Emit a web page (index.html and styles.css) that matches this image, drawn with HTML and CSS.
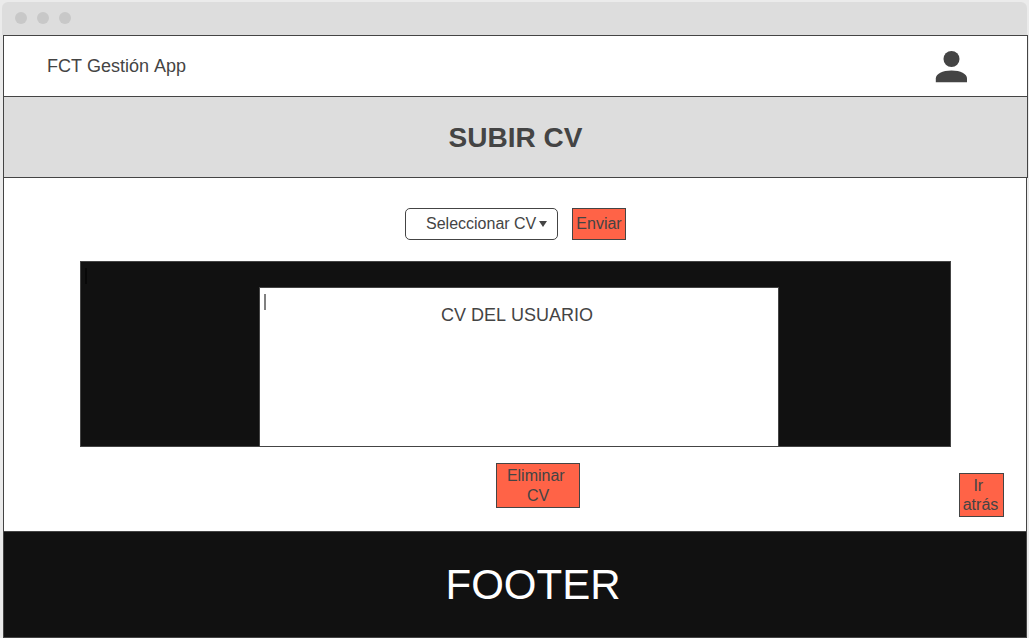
FILE: index.html
```html
<!DOCTYPE html>
<html lang="es">
<head>
<meta charset="utf-8">
<meta name="viewport" content="width=device-width, initial-scale=1">
<title>FCT Gestión App</title>
<link rel="stylesheet" href="styles.css">
</head>
<body>
<div class="window">
  <div class="window-bar">
    <span class="dot"></span><span class="dot"></span><span class="dot"></span>
  </div>
  <div class="app">
    <header class="header">
      <span class="brand">FCT Gestión App</span>
      <svg class="user" viewBox="0 0 32 32" aria-hidden="true">
        <circle cx="16.500" cy="8" r="8"/>
        <path d="M0.800 31.200V27.500C0.800 23 7.500 19.500 16.500 19.500S32 23 32 27.500V31.200Z"/>
      </svg>
    </header>
    <div class="title-band"><h1 class="title">SUBIR CV</h1></div>
    <main class="main">
      <form class="upload">
        <div class="picker">
          <select class="select" aria-label="Seleccionar CV"><option>Seleccionar CV</option></select>
          <svg class="arrow" viewBox="0 0 8 6" aria-hidden="true"><path d="M0 0H8L4 6Z"/></svg>
        </div>
        <button class="button send" type="button">Enviar</button>
      </form>
      <section class="viewer">
        <span class="caret caret-dark"></span>
        <div class="document">
          <span class="caret"></span>
          <p class="document-title">CV DEL USUARIO</p>
        </div>
      </section>
      <div class="actions">
        <button class="button remove" type="button">Eliminar&nbsp;<br>CV</button>
        <button class="button back" type="button">Ir&nbsp;<br>atrás</button>
      </div>
    </main>
    <footer class="footer">FOOTER</footer>
  </div>
</div>
</body>
</html>
```
FILE: styles.css
```css
* {
  box-sizing: border-box;
}

body {
  margin: 0;
  background: #ebebeb;
  color: #444;
  font-family: "Liberation Sans", Arial, sans-serif;
  font-size: 16px;
  font-kerning: none;
}

.window {
  display: flex;
  flex-direction: column;
  min-height: 100vh;
  padding: 2px 1px 0 2px;
}

.window-bar {
  display: flex;
  align-items: center;
  gap: 10px;
  height: 33px;
  margin-right: 1px;
  padding: 0 0 1px 13px;
  border-radius: 6px 6px 0 0;
  background: #ddd;
}

.dot {
  width: 12px;
  height: 12px;
  border-radius: 50%;
  background: #c8c8c8;
}

.app {
  display: flex;
  flex: 1;
  flex-direction: column;
  margin-left: 1px;
}

.header {
  display: flex;
  align-items: center;
  justify-content: space-between;
  height: 62px;
  padding: 1px 60px 0 43px;
  border: 1px solid #444;
  background: #fff;
}

.brand {
  font-size: 18px;
}

.user {
  width: 32px;
  height: 32px;
  fill: #444;
}

.title-band {
  padding: 25px 0 23px;
  border: 1px solid #444;
  border-top: 0;
  background: #ddd;
  text-align: center;
}

.title {
  margin: 0;
  font-size: 28px;
  line-height: 32px;
}

.main {
  flex: 1;
  margin-right: 1px;
  padding: 30px 22px 14px 76px;
  border: 1px solid #444;
  border-width: 0 1px;
  background: #fff;
}

.upload {
  display: flex;
  justify-content: center;
  gap: 14px;
  margin-right: 53px;
}

.picker {
  position: relative;
}

.select {
  appearance: none;
  width: 153px;
  height: 32px;
  padding: 0 0 1px 20px;
  border: 1px solid #444;
  border-radius: 5px;
  background: #fff;
  color: inherit;
  font: inherit;
  font-kerning: none;
}

.arrow {
  position: absolute;
  top: 13px;
  right: 11px;
  width: 8px;
  height: 6px;
  fill: #444;
  pointer-events: none;
}

.button {
  padding: 0;
  border: 1px solid #444;
  border-radius: 0;
  background: #ff6347;
  color: #444;
  font: inherit;
  font-kerning: none;
  line-height: 20px;
}

.send {
  width: 54px;
  height: 32px;
}

.viewer {
  position: relative;
  margin: 21px 53px 0 0;
  padding: 25px 171px 0 178px;
  border: 1px solid #444;
  background: #111;
}

.document {
  position: relative;
  min-height: 159px;
  padding: 16px 4px 0 0;
  border: 1px solid #444;
  border-bottom: 0;
  background: #fff;
}

.document-title {
  margin: 0;
  font-size: 18px;
  line-height: 22px;
  text-align: center;
}

.caret {
  position: absolute;
  top: 6px;
  left: 4px;
  width: 2px;
  height: 16px;
  background: #808080;
}

.caret-dark {
  background: #080808;
}

.actions {
  display: grid;
  grid-template-columns: 1fr auto;
  align-items: end;
  margin-top: 16px;
}

.remove {
  justify-self: center;
  align-self: start;
  width: 84px;
  height: 45px;
  margin-left: 37px;
}

.back {
  width: 45px;
  height: 44px;
  margin-top: 10px;
  padding-right: 2px;
  line-height: 19px;
}

.footer {
  margin-right: 1px;
  padding: 28px 0 28px 36px;
  border: 1px solid #444;
  background: #111;
  color: #fff;
  font-size: 42px;
  line-height: 49px;
  text-align: center;
}
```
